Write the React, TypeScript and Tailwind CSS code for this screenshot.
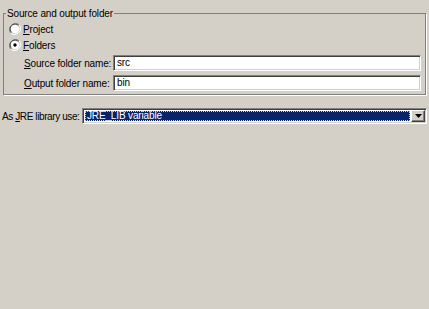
import React from 'react';

function Radio({ checked }: { checked?: boolean }) {
  return (
    <svg width="12" height="12" viewBox="0 0 12 12" className="shrink-0">
      <path d="M10.2 1.8A6 6 0 0 0 1.8 10.2" fill="none" stroke="#808080" strokeWidth="1" />
      <path d="M9.4 2.6A4.8 4.8 0 0 0 2.6 9.4" fill="none" stroke="#404040" strokeWidth="1" />
      <path d="M1.8 10.2A6 6 0 0 0 10.2 1.8" fill="none" stroke="#ffffff" strokeWidth="1" />
      <circle cx="6" cy="6" r="4.2" fill="#ffffff" />
      {checked && <circle cx="6" cy="6" r="1.7" fill="#000000" />}
    </svg>
  );
}

function Field({ hot, rest, value }: { hot: string; rest: string; value: string }) {
  return (
    <div className="flex items-center h-[16px]">
      <span className="w-[89px] shrink-0 whitespace-nowrap">
        <span className="underline">{hot}</span>
        {rest}
      </span>
      <div className="flex-1 h-[16px] bg-white border-t border-l border-[#808080] border-b border-r border-b-white border-r-white shadow-[inset_1px_1px_0_#404040,inset_-1px_-1px_0_#d4d0c8] flex items-center pl-[3px] leading-none">
        {value}
      </div>
    </div>
  );
}

export default function App() {
  return (
    <div className="w-[429px] h-[309px] bg-[#d4d0c8] text-black text-[10px] tracking-[-0.15px] font-['Tahoma','Liberation_Sans',sans-serif] pt-[7px] overflow-hidden">
      <fieldset className="mx-[3px] border border-[#808080] shadow-[1px_1px_0_#ffffff] pl-[5px] pr-[4px] pb-[3px]">
        <legend className="-ml-[3px] px-[1px] leading-[13px]">Source and output folder</legend>
        <div className="flex items-center h-[16px] gap-[2px] mt-[1px]">
          <Radio />
          <span>
            <span className="underline">P</span>roject
          </span>
        </div>
        <div className="flex items-center h-[16px] gap-[2px]">
          <Radio checked />
          <span>
            <span className="underline">F</span>olders
          </span>
        </div>
        <div className="pl-[15px] flex flex-col gap-[4px] mt-[2px]">
          <Field hot="S" rest="ource folder name:" value="src" />
          <Field hot="O" rest="utput folder name:" value="bin" />
        </div>
      </fieldset>

      <div className="flex items-center mt-[13px] pl-[2px] pr-[2px]">
        <span className="flex-1 whitespace-nowrap tracking-[-0.4px]">
          As <span className="underline">J</span>RE library use:
        </span>
        <div className="w-[345px] h-[16px] flex bg-white border-t border-l border-[#808080] border-b border-r border-b-white border-r-white shadow-[inset_1px_1px_0_#404040,inset_-1px_-1px_0_#d4d0c8] p-[1px]">
          <div className="flex-1 m-[1px] bg-[#0a246a] text-white outline outline-1 outline-dotted outline-[#d4d0c8] -outline-offset-1 flex items-center pl-[2px] leading-none">
            JRE_LIB variable
          </div>
          <div className="w-[14px] bg-[#d4d0c8] border-t border-l border-white border-b border-r border-b-[#404040] border-r-[#404040] shadow-[inset_-1px_-1px_0_#808080] flex items-center justify-center">
            <svg width="7" height="4" viewBox="0 0 7 4">
              <path d="M0 0H7L3.5 4Z" fill="#000" />
            </svg>
          </div>
        </div>
      </div>
    </div>
  );
}
